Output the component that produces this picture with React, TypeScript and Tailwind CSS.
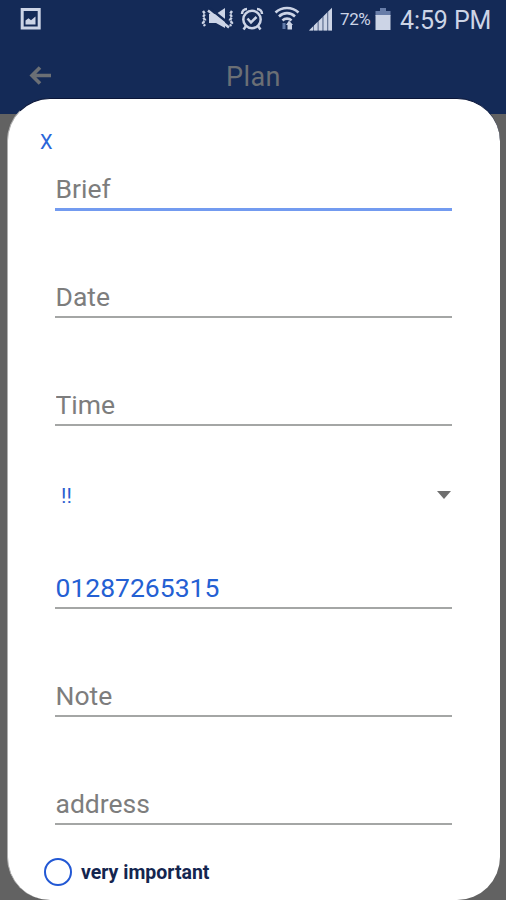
import React, { useState } from 'react';

export default function App() {
  const [phone, setPhone] = useState('01287265315');
  const [important, setImportant] = useState(false);

  return (
    <div className="relative h-[900px] w-[506px] overflow-hidden bg-[#626262] font-['Roboto',sans-serif]">
      {/* Header */}
      <div className="h-[114px] bg-[#142a57]">
        <StatusBar />
        <div className="grid h-[76px] grid-cols-[1fr_auto_1fr] items-center pl-[28px] pr-[27px]">
          <BackIcon />
          <h1 className="mt-[2px] text-[27px] leading-none tracking-[0.4px] text-[#6b6f75]">Plan</h1>
        </div>
      </div>

      {/* Plan dialog */}
      <div className="absolute left-[7px] top-[98px] h-[802px] w-[493px] rounded-[43px] border-l border-t border-l-[#b0b0b0] border-t-[#0b1638] bg-white">
        <div className="flex h-[68px] items-end pl-[32px]">
          <button type="button" className="mb-[13px] h-[24px] text-[20px] leading-[24px] text-[#2a66d9]">X</button>
        </div>

        <form className="flex flex-col gap-[64px] pl-[47px] pr-[48px]">
          <Field placeholder="Brief" active />
          <Field placeholder="Date" />
          <Field placeholder="Time" />

          {/* Priority */}
          <div className="flex h-[11px] items-start justify-between pl-[6px] pr-[1px]">
            <span className="mt-[-7px] text-[21px] leading-[25px] text-[#2a5fd0]">!!</span>
            <svg className="h-[8px] w-[14px]" viewBox="0 0 14 8">
              <path d="M0 0h14L7 8z" fill="#6f6f6f" />
            </svg>
          </div>

          <Field placeholder="Phone" value={phone} onChange={setPhone} />
          <Field placeholder="Note" />
          <Field placeholder="address" />
        </form>

        <button
          type="button"
          onClick={() => setImportant(!important)}
          className="ml-[36px] mt-[32px] flex h-[28px] items-center gap-[9px]"
        >
          <span className="flex size-[28px] items-center justify-center rounded-full border-2 border-[#2258d4]">
            {important && <span className="size-[14px] rounded-full bg-[#2258d4]" />}
          </span>
          <span className="mt-[2px] text-[19.5px] font-bold leading-none text-[#14254f]">very important</span>
        </button>
      </div>
    </div>
  );
}

interface FieldProps {
  placeholder: string;
  value?: string;
  active?: boolean;
  onChange?: (value: string) => void;
}

function Field({ placeholder, value, active, onChange }: FieldProps) {
  return (
    <div className="flex h-[44px] flex-col">
      <input
        type="text"
        placeholder={placeholder}
        value={value}
        onChange={(e) => onChange?.(e.target.value)}
        className="h-[41px] w-full pl-[0.5px] pt-px text-[26.5px] text-[#2460d3] outline-none placeholder:text-[#7d7d7d]"
      />
      <div className={active ? 'h-[3px] bg-[#739bf0]' : 'h-[2px] bg-[#a4a6a5]'} />
    </div>
  );
}

function StatusBar() {
  return (
    <div className="flex h-[38px] items-center pl-[20px] pr-[15px] text-[#ccd4e6]">
      <svg className="h-[24px] w-[22px]" viewBox="0 0 22 24" fill="none">
        <path d="M2.2 2.5h17v18.500h-17z" stroke="currentColor" strokeWidth="3" />
        <path d="M5.5 17.500v-4l3-2.3 2.5 2 4.5-3.8v8.100z" fill="currentColor" />
      </svg>

      <div className="ml-auto flex items-center">
        {/* Muted, vibrating */}
        <svg className="h-[24px] w-[34px]" viewBox="0 0 34 24" fill="none" stroke="currentColor">
          <path d="M8 7h7l9-6v20l-9-5H8z" fill="currentColor" stroke="none" />
          <path d="M9 1.500l20 16" stroke="#142a57" strokeWidth="2.500" />
          <path d="M7 3.500l21 17" strokeWidth="2.500" />
          <path d="M2 4l2 3-2 3 2 3-2 3 2 3M31 4l-2 3 2 3-2 3 2 3-2 3" strokeWidth="2.400" strokeDasharray="3 1" />
        </svg>
        {/* Alarm */}
        <svg className="ml-[5px] mr-[-1px] h-[24px] w-[24px]" viewBox="0 0 24 24" fill="none" stroke="currentColor" strokeWidth="2.5">
          <circle cx="12" cy="12.500" r="8.700" />
          <path d="M7.500 11.500l3.500 4 5.500-5.500M2 7c0-3 2-5 5-5M22 7c0-3-2-5-5-5M6 19l-2.500 3.500M18 19l2.500 3.500" />
        </svg>
        {/* Wifi with traffic arrows */}
        <svg className="ml-[11px] h-[26px] w-[26px]" viewBox="0 0 26 26" fill="none" stroke="currentColor" strokeWidth="2.6">
          <path d="M1.500 6.500c6.500-6 16.500-6 23 0M5 10.500c4.500-4.500 11.500-4.500 16 0M8.500 14.500c2.500-2.500 6.500-2.500 9 0" />
          <path d="M8.500 17h3v6h-3z" fill="#5f79a8" stroke="none" />
          <path d="M15 14.500l4 4.500h-1v4.500h-4.500V19H12z" fill="currentColor" stroke="none" />
        </svg>
        {/* Signal */}
        <svg className="ml-[9px] h-[24px] w-[24px]" viewBox="0 0 24 24" fill="currentColor">
          <path d="M0 23.500L23 .5v23z" opacity="0.45" />
          <path d="M0 23.500l4-4v4zM5 18.500l3.500-3.500v8.500H5zM9.800 14l3.500-3.500v13H9.800zM14.600 9.300L18 5.800v17.700h-3.400zM19.300 4.500L23 1v22.500h-3.700z" />
        </svg>
        <span className="ml-[7px] mt-px w-[31px] text-[17px] leading-none tracking-[-0.4px]">72%</span>
        <svg className="ml-[4px] h-[24px] w-[16px]" viewBox="0 0 16 24">
          <path d="M5 1h6v3h4.500v5H.5V4H5z" fill="#687da8" />
          <path d="M.5 8h15v15H.5z" fill="currentColor" />
        </svg>
        <span className="ml-[9px] mt-[2px] w-[91px] whitespace-nowrap text-[25px] leading-none tracking-[-0.1px]">4:59 PM</span>
      </div>
    </div>
  );
}

function BackIcon() {
  return (
    <svg className="h-[20px] w-[24px]" viewBox="0 0 24 20" fill="none" stroke="#6b6f75" strokeWidth="3.6">
      <path d="M23 9.500H4M12 1.500L4 9.500l8 8" />
    </svg>
  );
}
